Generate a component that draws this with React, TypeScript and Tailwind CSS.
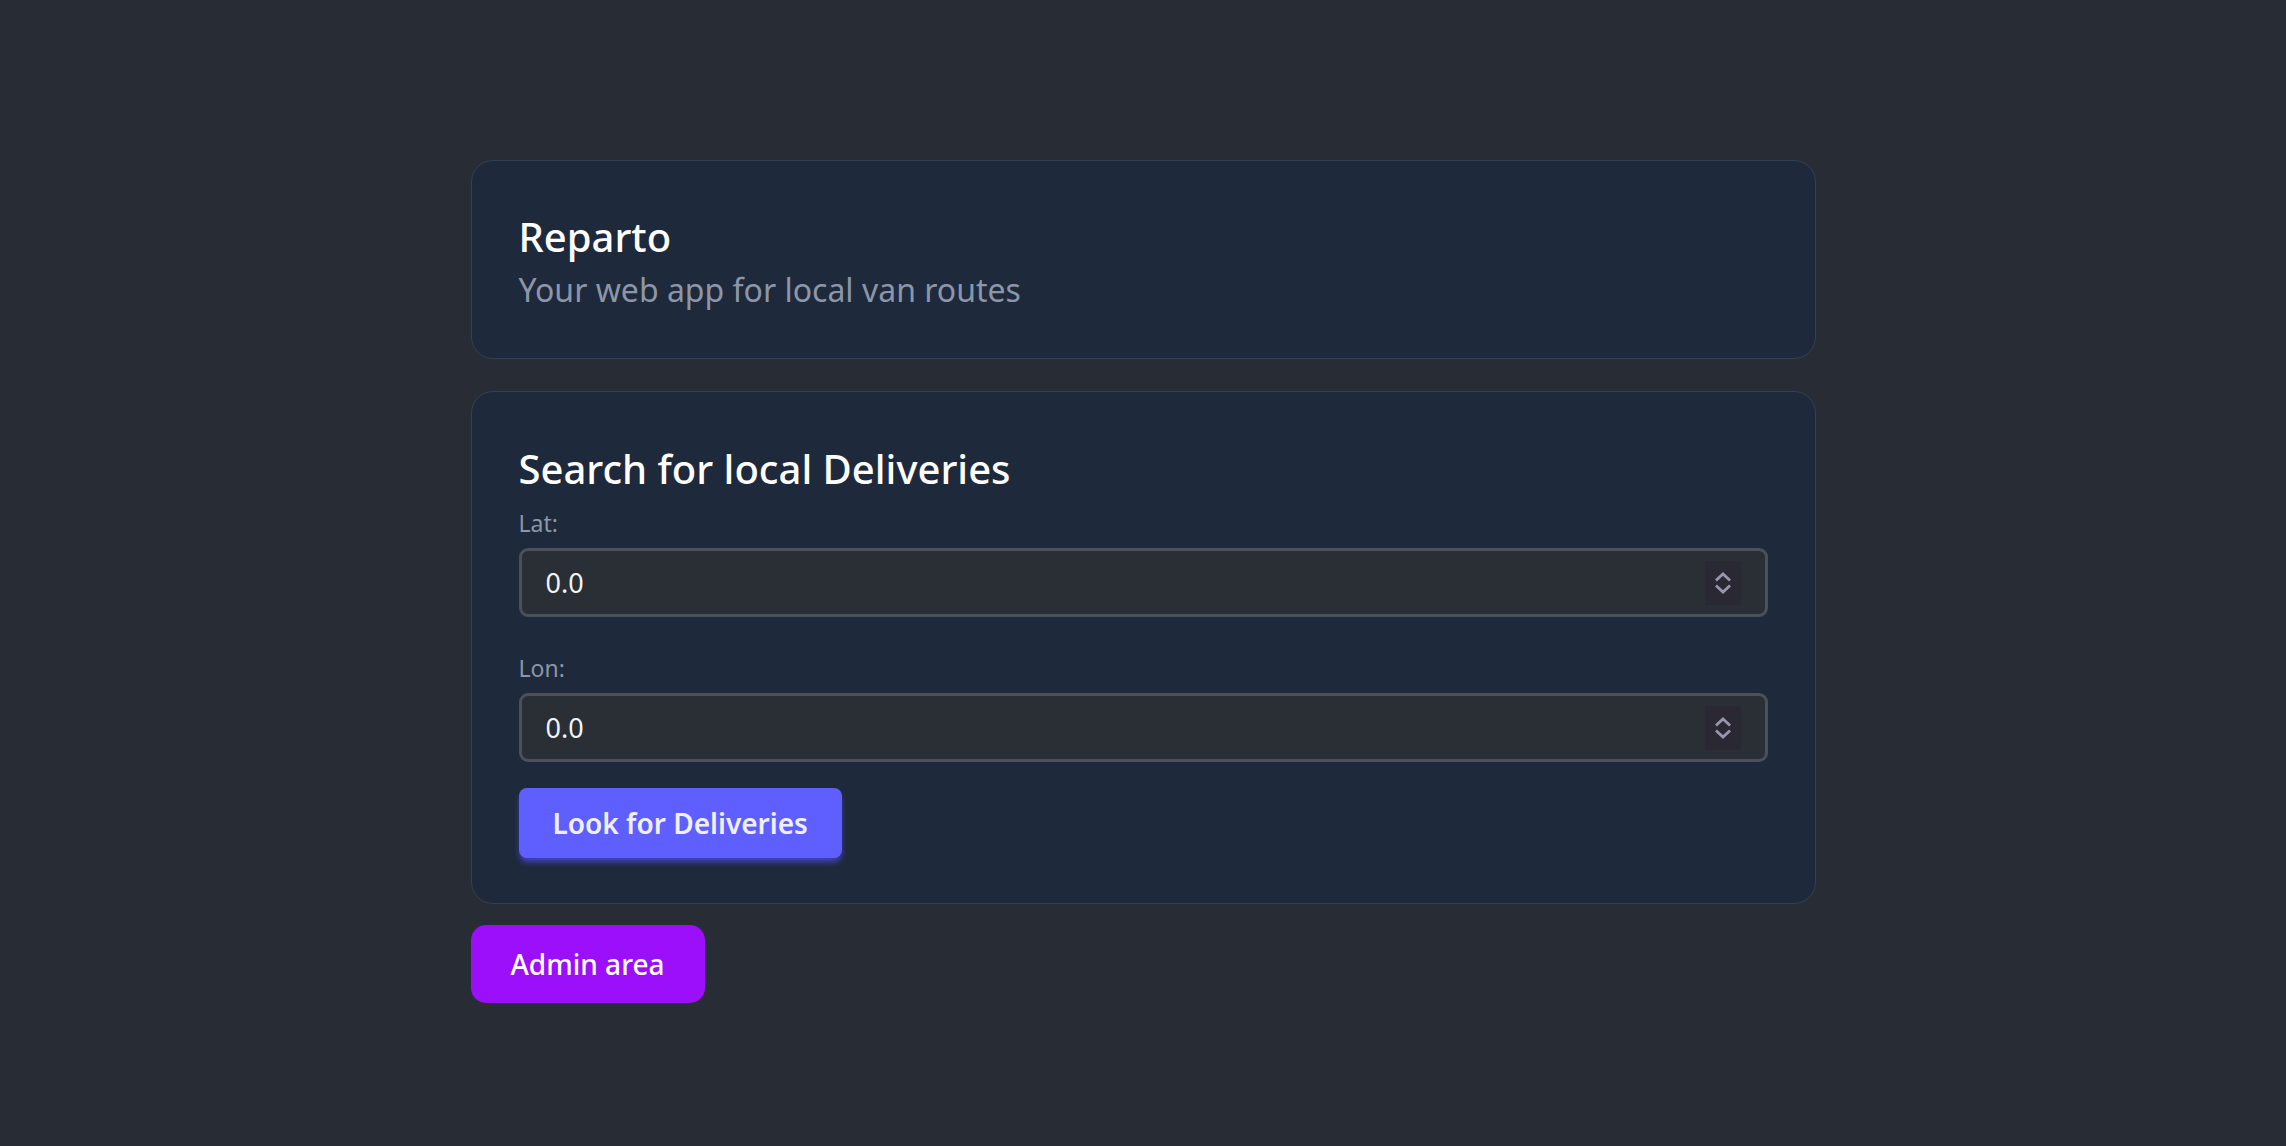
import React from 'react';

interface CoordFieldProps {
  label: string;
  value: string;
}

const Spinner: React.FC = () => (
  <div className="absolute right-[27px] top-1/2 -translate-y-1/2 w-[36px] h-[44px] bg-[#2a2833] flex items-center justify-center">
    <svg width="20" height="28" viewBox="0 0 20 28" fill="none" stroke="#9a95ac" strokeWidth="2.8" strokeLinecap="square">
      <path d="M4 10.5 L10 5 L16 10.5" />
      <path d="M4 17.5 L10 23 L16 17.5" />
    </svg>
  </div>
);

const CoordField: React.FC<CoordFieldProps> = ({ label, value }) => {
  return (
    <div className="flex flex-col">
      <label className="text-[23px] leading-[31px] text-[#8c96a8] mb-[9px]">{label}</label>
      <div className="relative">
        <input
          type="text"
          readOnly
          value={value}
          className="w-full h-[69px] rounded-[9px] border-[3px] border-[#4a5159] bg-[#2a2e35] pl-[24px] text-[27px] text-[#f1f3f6] outline-none"
        />
        <Spinner />
      </div>
    </div>
  );
};

const App: React.FC = () => {
  return (
    <div
      className="min-h-screen bg-[#282c34] pt-[160px]"
      style={{ fontFamily: '"Noto Sans", "Open Sans", sans-serif' }}
    >
      <div className="mx-auto w-[1345px] flex flex-col">
        <div className="bg-[#1e293b] border border-[#334155] rounded-[22px] px-[47px] pt-[52px] pb-[49px]">
          <h1 className="text-[40px] leading-[48px] font-medium text-white">Reparto</h1>
          <p className="mt-[10px] text-[32px] leading-[38px] text-[#8c96a8]">
            Your web app for local van routes
          </p>
        </div>

        <div className="mt-[32px] bg-[#1e293b] border border-[#334155] rounded-[22px] px-[47px] pt-[53px] pb-[45px]">
          <h2 className="text-[40px] leading-[48px] font-medium text-white mb-[15px]">
            Search for local Deliveries
          </h2>
          <CoordField label="Lat:" value="0.0" />
          <div className="mt-[36px]">
            <CoordField label="Lon:" value="0.0" />
          </div>
          <button className="mt-[26px] h-[70px] px-[34px] rounded-[8px] bg-[#5f5fff] text-[28px] font-semibold text-[#eef0ff] shadow-[0_5px_6px_-1px_rgba(72,72,210,0.9)]">
            Look for Deliveries
          </button>
        </div>

        <div className="mt-[21px]">
          <button className="h-[78px] px-[40px] rounded-[15px] bg-[#9b0ffa] text-[28px] font-medium text-white">
            Admin area
          </button>
        </div>
      </div>
    </div>
  );
};

export default App;
